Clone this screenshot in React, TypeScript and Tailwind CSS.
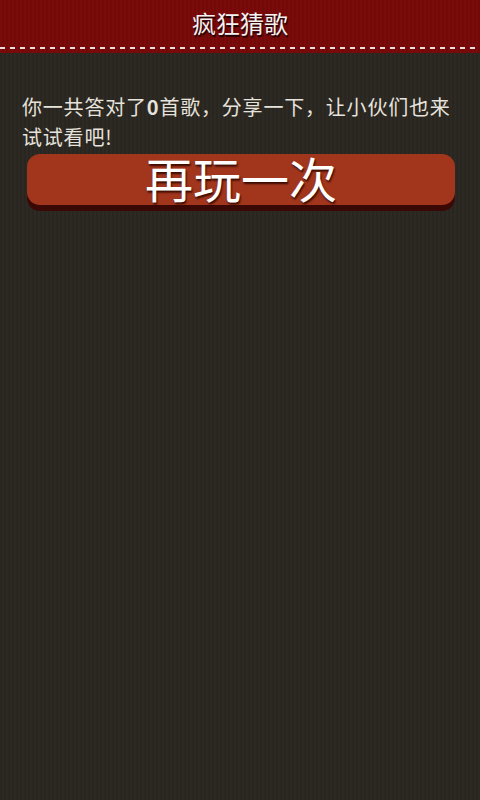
export default function App() {
  return (
    <div className="min-h-[800px] w-[480px] bg-[#2a2622] bg-[repeating-linear-gradient(90deg,#29251f_0px,#29251f_2px,#2d2925_2px,#2d2925_4px)] font-['Noto_Sans_CJK_SC',sans-serif]">
      {/* title bar with stitched seam */}
      <header className="relative h-[53px] bg-[#780a0a] bg-[repeating-linear-gradient(90deg,#7b0b0b_0px,#7b0b0b_2px,#740909_2px,#740909_4px)] flex items-start justify-center">
        <h1 className="mt-[8px] text-[24px] leading-[30px] text-[#f2f2f2] [text-shadow:1px_2px_1px_#1a0000]">
          疯狂猜歌
        </h1>
        <div className="absolute left-0 right-0 top-[47px] h-[2px] bg-[repeating-linear-gradient(90deg,#e8dede_0px,#e8dede_5px,transparent_5px,transparent_10px)]" />
      </header>

      <main className="pt-[39px]">
        <p className="ml-[22px] w-[436px] text-[20px] leading-[30px] tracking-[0.8px] text-[#e6e2dc]">
          你一共答对了<span className="font-bold">0</span>首歌，分享一下，让小伙们也来试试看吧!
        </p>
        <button className="mt-[2px] ml-[27px] flex h-[51px] w-[428px] items-center justify-center rounded-[13px] bg-[#a1361c] pb-[6px] shadow-[0_6px_0_#3a0805] text-[48px] leading-none text-white [text-shadow:1px_2px_2px_#3a0a00]">
          再玩一次
        </button>
      </main>
    </div>
  );
}
